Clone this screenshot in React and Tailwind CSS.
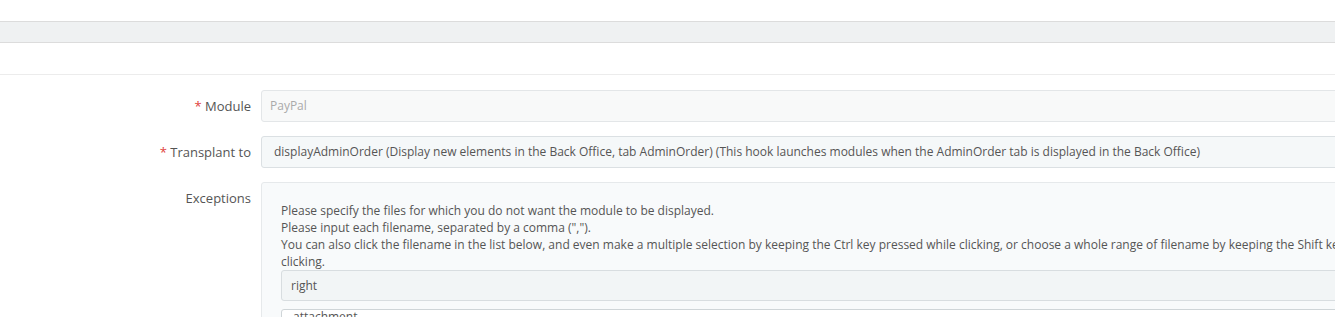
export default function App() {
  return (
    <div className="w-[1335px] h-[317px] overflow-hidden bg-white font-['Open_Sans',sans-serif] text-[#555]">
      <div className="h-[21px]" />
      <div className="h-[22px] border-y border-[#dcdcdc] bg-[#eff1f2]" />
      <div className="h-[31px]" />
      <div className="border-t border-[#ececec]" />
      <div className="pt-[15px] w-[1500px]">
        <div className="flex mb-[14px]">
          <div className="w-[261px] shrink-0 pr-[10px] text-right text-[13px] leading-[32px]">
            <span className="text-[#e0413c]">*</span> Module
          </div>
          <div className="w-[1200px] h-[32px] border border-[#e3e6e8] rounded-[3px] bg-[#f8f9f9] pl-[8px] text-[12px] leading-[30px] text-[#aaa]">
            PayPal
          </div>
        </div>
        <div className="flex mb-[14px]">
          <div className="w-[261px] shrink-0 pr-[10px] text-right text-[13px] leading-[32px]">
            <span className="text-[#e0413c]">*</span> Transplant to
          </div>
          <div className="w-[1200px] h-[32px] border border-[#dbe0e3] rounded-[3px] bg-[#f5f8f9] pl-[12px] text-[12px] leading-[30px] text-[#555] whitespace-nowrap">
            displayAdminOrder (Display new elements in the Back Office, tab AdminOrder) (This hook launches modules when the AdminOrder tab is displayed in the Back Office)
          </div>
        </div>
        <div className="flex">
          <div className="w-[261px] shrink-0 pr-[10px] text-right text-[13px] leading-[32px]">
            Exceptions
          </div>
          <div className="w-[1200px] border border-[#e6e9eb] rounded-[3px] bg-[#f8fafb] pt-[19px] px-[19px]">
            <div className="text-[12px] leading-[17px] text-[#555] whitespace-nowrap">
              <div>Please specify the files for which you do not want the module to be displayed.</div>
              <div>Please input each filename, separated by a comma (",").</div>
              <div>You can also click the filename in the list below, and even make a multiple selection by keeping the Ctrl key pressed while clicking, or choose a whole range of filename by keeping the Shift key pressed while</div>
              <div>clicking.</div>
            </div>
            <div className="h-[31px] border border-[#d8dde0] rounded-[3px] bg-[#f2f5f6] pl-[9px] text-[12px] leading-[29px] text-[#555]">
              right
            </div>
            <div className="mt-[8px] h-[60px] border border-[#cfd5d8] rounded-[3px] bg-white pl-[11px] text-[12px] leading-[14px] text-[#555]">
              attachment
            </div>
          </div>
        </div>
      </div>
    </div>
  );
}
